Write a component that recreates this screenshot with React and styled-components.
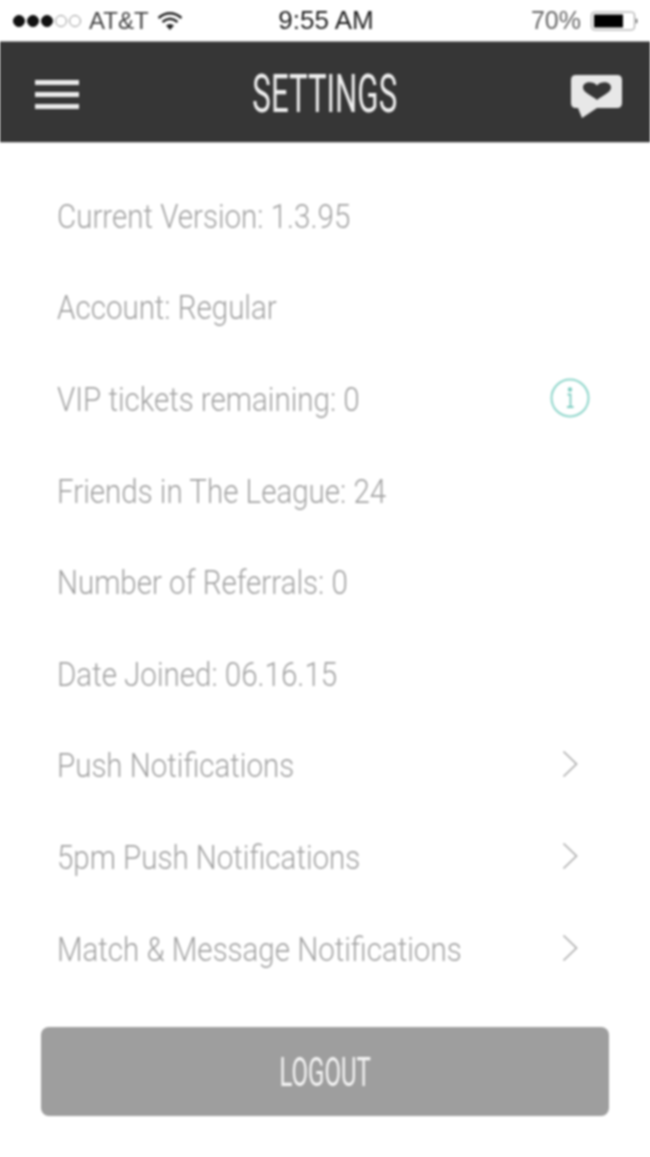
import React from 'react'
import styled, { createGlobalStyle } from 'styled-components'

const GlobalStyle = createGlobalStyle`
  html, body {
    margin: 0;
    padding: 0;
    background: #fff;
  }
`

const Screen = styled.div`
  width: 650px;
  height: 1157px;
  overflow: hidden;
  background: #fff;
  font-family: Roboto, "Liberation Sans", sans-serif;
  filter: blur(0.8px);
`

const StatusBar = styled.div`
  height: 41px;
  box-sizing: border-box;
  padding: 0 11px 0 13px;
  display: grid;
  grid-template-columns: 1fr auto 1fr;
  align-items: center;
  font-family: "Liberation Sans", Arial, sans-serif;
  font-size: 24px;
  color: #444;
`

const StatusLeft = styled.div`
  display: flex;
  align-items: center;
  gap: 8px;
`

const Clock = styled.div`
  font-size: 26px;
  color: #222;
`

const StatusRight = styled.div`
  display: flex;
  align-items: center;
  justify-content: flex-end;
  gap: 10px;
  font-size: 25px;
  color: #666;
`

const Signal = styled.div`
  display: flex;
  gap: 2px;
`

const Dot = styled.span`
  width: 12px;
  height: 12px;
  box-sizing: border-box;
  border-radius: 50%;
  border: 1px solid ${p => (p.$on ? '#111' : '#999')};
  background: ${p => (p.$on ? '#111' : 'transparent')};
`

const NavBar = styled.div`
  height: 101px;
  background: #363636;
  border-top: 1px solid #999;
  box-shadow: 0 1px 0 #ccc;
  box-sizing: border-box;
  padding: 0 27px 0 35px;
  display: flex;
  align-items: center;
  justify-content: space-between;
`

const Title = styled.div`
  padding-top: 4px;
  font-size: 53px;
  font-weight: 400;
  color: #eee;
  transform: scaleX(0.59);
  white-space: nowrap;
`

const NavIcon = styled.svg`
  margin-top: ${p => p.$drop}px;
`

const List = styled.div`
  padding: 28px 60px 0 57px;
`

const Row = styled.div`
  height: 91.6px;
  display: flex;
  align-items: center;
  justify-content: space-between;
`

const Label = styled.div`
  font-size: 34px;
  font-weight: 300;
  color: #a2a2a2;
  white-space: nowrap;
  transform: scaleX(0.868);
  transform-origin: left center;
`

const IconSlot = styled.div`
  width: 40px;
  padding-bottom: 2px;
  display: flex;
  justify-content: center;
`

const LogoutButton = styled.div`
  margin: 33px 41px 0;
  height: 89px;
  border-radius: 8px;
  background: #9e9e9e;
  display: flex;
  align-items: center;
  justify-content: center;
`

const LogoutText = styled.span`
  font-size: 41px;
  font-weight: 400;
  color: #f4f4f4;
  transform: scaleX(0.585);
`

const Wifi = () => (
  <svg width="26" height="20" viewBox="0 0 26 20" fill="none" stroke="#222" strokeWidth="2.4">
    <path d="M1.5 7 Q13 -2.5 24.5 7" />
    <path d="M5.5 11 Q13 4.5 20.5 11" />
    <path d="M13 19 L9 14.5 Q13 11.5 17 14.5 Z" fill="#222" stroke="none" />
  </svg>
)

const Battery = () => (
  <svg width="48" height="20" viewBox="0 0 48 20">
    <rect x="0.5" y="1" width="43" height="18" rx="3" fill="#fff" stroke="#999" />
    <rect x="3" y="3.5" width="29" height="13" fill="#000" />
    <path d="M45 7 Q47.5 10 45 13 Z" fill="#222" />
  </svg>
)

const Menu = () => (
  <NavIcon $drop={5} width="44" height="29" viewBox="0 0 44 29" fill="#e8e8e8">
    <rect y="0" width="44" height="5" />
    <rect y="12" width="44" height="5" />
    <rect y="24" width="44" height="5" />
  </NavIcon>
)

const MessageHeart = () => (
  <NavIcon $drop={10} width="52" height="44" viewBox="0 0 52 44">
    <path
      d="M5 0 H46 Q51 0 51 5 V28 Q51 33 46 33 H26 L11 43 L7 33 H5 Q0 33 0 28 V5 Q0 0 5 0 Z"
      fill="#e8e8e8"
    />
    <path
      d="M26 25 C22 21 12 18 12 12.5 C12 6.5 22 5.5 26 10.5 C30 5.5 40 6.5 40 12.5 C40 18 30 21 26 25 Z"
      fill="#363636"
    />
  </NavIcon>
)

const Info = () => (
  <svg width="40" height="40" viewBox="0 0 40 40" fill="none" stroke="#8fd6cb" strokeWidth="2">
    <circle cx="20" cy="20" r="18.5" />
    <path d="M17.5 16.5 H20.5 V28.5 M17 29 H23.5" stroke="#7fcdc2" strokeWidth="1.8" />
    <circle cx="20" cy="11.5" r="1.2" fill="#7fcdc2" stroke="#7fcdc2" />
  </svg>
)

const Chevron = () => (
  <svg width="20" height="28" viewBox="0 0 20 28" fill="none" stroke="#aaa" strokeWidth="1.6">
    <path d="M3.5 1.5 L16.5 14 L3.5 26.5" />
  </svg>
)

const rows = [
  { text: 'Current Version: 1.3.95' },
  { text: 'Account: Regular' },
  { text: 'VIP tickets remaining: 0', icon: <Info /> },
  { text: 'Friends in The League: 24' },
  { text: 'Number of Referrals: 0' },
  { text: 'Date Joined: 06.16.15' },
  { text: 'Push Notifications', icon: <Chevron /> },
  { text: '5pm Push Notifications', icon: <Chevron /> },
  { text: 'Match & Message Notifications', icon: <Chevron /> },
]

export default function App() {
  return (
    <Screen>
      <GlobalStyle />
      <StatusBar>
        <StatusLeft>
          <Signal>
            {[1, 1, 1, 0, 0].map((on, i) => (
              <Dot key={i} $on={!!on} />
            ))}
          </Signal>
          AT&T
          <Wifi />
        </StatusLeft>
        <Clock>9:55 AM</Clock>
        <StatusRight>
          70%
          <Battery />
        </StatusRight>
      </StatusBar>
      <NavBar>
        <Menu />
        <Title>SETTINGS</Title>
        <MessageHeart />
      </NavBar>
      <List>
        {rows.map(row => (
          <Row key={row.text}>
            <Label>{row.text}</Label>
            {row.icon && <IconSlot>{row.icon}</IconSlot>}
          </Row>
        ))}
      </List>
      <LogoutButton>
        <LogoutText>LOGOUT</LogoutText>
      </LogoutButton>
    </Screen>
  )
}
